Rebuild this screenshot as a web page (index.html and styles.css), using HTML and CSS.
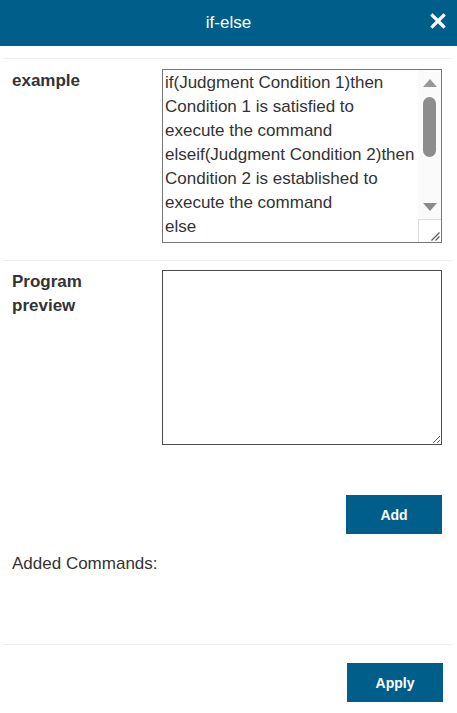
FILE: index.html
```html
<!DOCTYPE html>
<html>
<head>
<meta charset="utf-8">
<link rel="stylesheet" href="styles.css">
</head>
<body>
<div class="dialog">
  <div class="header">
    <span class="title">if-else</span>
    <span class="close" aria-label="close">
      <svg width="16" height="16" viewBox="0 0 16 16"><path d="M2.5 2.5 L13.5 13.5 M13.5 2.5 L2.5 13.5" stroke="#fff" stroke-width="3.2" stroke-linecap="square"/></svg>
    </span>
  </div>
  <div class="content">
    <div class="row row-example">
      <div class="label">example</div>
      <div class="code-box">
        <textarea class="code-text" readonly>if(Judgment Condition 1)then
Condition 1 is satisfied to execute the command
elseif(Judgment Condition 2)then
Condition 2 is established to execute the command
else
Condition 1 and Condition 2 are not established to execute the command
end</textarea>
        <div class="scrollbar">
          <div class="sb-btn sb-up"><span class="tri tri-up"></span></div>
          <div class="sb-track"><div class="sb-thumb"></div></div>
          <div class="sb-btn sb-down"><span class="tri tri-down"></span></div>
          <div class="sb-corner">
            <svg width="22" height="22" viewBox="0 0 22 22"><path d="M20.5 12.5 L12.5 20.5 M20.5 16.5 L16.5 20.5" stroke="#555" stroke-width="1.1"/></svg>
          </div>
        </div>
      </div>
    </div>
    <div class="row row-preview">
      <div class="label">Program preview</div>
      <textarea class="field-preview"></textarea>
    </div>
    <div class="add-bar">
      <button class="btn">Add</button>
    </div>
    <div class="added">Added Commands:</div>
    <div class="footer">
      <button class="btn">Apply</button>
    </div>
  </div>
</div>
</body>
</html>
```

FILE: styles.css
```css
html, body {
  margin: 0;
  padding: 0;
  background: #fff;
}
body {
  font-family: "Liberation Sans", Arial, sans-serif;
  color: #333;
}
.dialog {
  width: 457px;
}
.header {
  height: 46px;
  background: #005e8b;
  display: flex;
  align-items: center;
  justify-content: center;
  position: relative;
}
.title {
  color: #fff;
  font-size: 17px;
}
.close {
  position: absolute;
  right: 11px;
  top: 13px;
  width: 16px;
  height: 16px;
  display: block;
}
.close svg { display: block; }
.content {
  margin: 12px 5px 0 3px;
}
.row {
  border-top: 1px solid #eeeeee;
  display: flex;
  padding-left: 9px;
}
.row-example {
  padding-top: 10px;
  padding-bottom: 17px;
}
.row-preview {
  padding-top: 9px;
}
.label {
  width: 150px;
  flex: none;
  font-weight: bold;
  font-size: 17px;
  line-height: 24px;
  padding-right: 30px;
  box-sizing: border-box;
}
.code-box {
  box-sizing: border-box;
  width: 280px;
  height: 174px;
  border: 1px solid #767676;
  display: flex;
  background: #fff;
}
.code-text {
  flex: 1;
  min-width: 0;
  display: block;
  box-sizing: border-box;
  height: 100%;
  margin: 0;
  border: none;
  outline: none;
  resize: none;
  overflow: hidden;
  font-family: "Liberation Sans", Arial, sans-serif;
  font-size: 17px;
  line-height: 24px;
  color: #333;
  padding: 1px 2px;
  background: transparent;
}
.scrollbar {
  width: 23px;
  flex: none;
  display: flex;
  flex-direction: column;
  background: #fafafa;
}
.sb-btn {
  height: 25px;
  flex: none;
  display: flex;
  justify-content: center;
  align-items: center;
}
.tri {
  display: block;
  width: 0;
  height: 0;
  border-left: 7px solid transparent;
  border-right: 7px solid transparent;
}
.tri-up {
  border-bottom: 8px solid #999;
}
.tri-down {
  border-top: 8px solid #8a8a8a;
}
.sb-track {
  flex: 1;
  display: flex;
  justify-content: center;
  align-items: flex-start;
}
.sb-thumb {
  width: 13px;
  height: 60px;
  margin-top: 2px;
  border-radius: 7px;
  background: #8d8d8d;
}
.sb-corner {
  height: 23px;
  flex: none;
  box-sizing: border-box;
  border-top: 1px solid #dcdcdc;
  border-left: 1px solid #dcdcdc;
  background: #fff;
}
.sb-corner svg { display: block; }
.field-preview {
  display: block;
  box-sizing: border-box;
  width: 280px;
  height: 175px;
  margin: 0;
  font-family: "Liberation Sans", Arial, sans-serif;
  font-size: 17px;
  line-height: 24px;
  color: #333;
  padding: 1px 2px;
  border: 1px solid #4a4a4a;
  border-radius: 0;
  outline: none;
}
.add-bar {
  display: flex;
  justify-content: flex-end;
  margin-top: 50px;
  margin-right: 10px;
}
.btn {
  width: 96px;
  height: 39px;
  border: none;
  background: #005e8b;
  color: #fff;
  font-family: "Liberation Sans", Arial, sans-serif;
  font-weight: bold;
  font-size: 14px;
  padding: 0;
}
.added {
  font-size: 17px;
  line-height: 24px;
  padding-left: 9px;
  margin-top: 18px;
  height: 92px;
}
.footer {
  border-top: 1px solid #eeeeee;
  display: flex;
  justify-content: flex-end;
  padding-top: 18px;
  padding-right: 9px;
}
```
